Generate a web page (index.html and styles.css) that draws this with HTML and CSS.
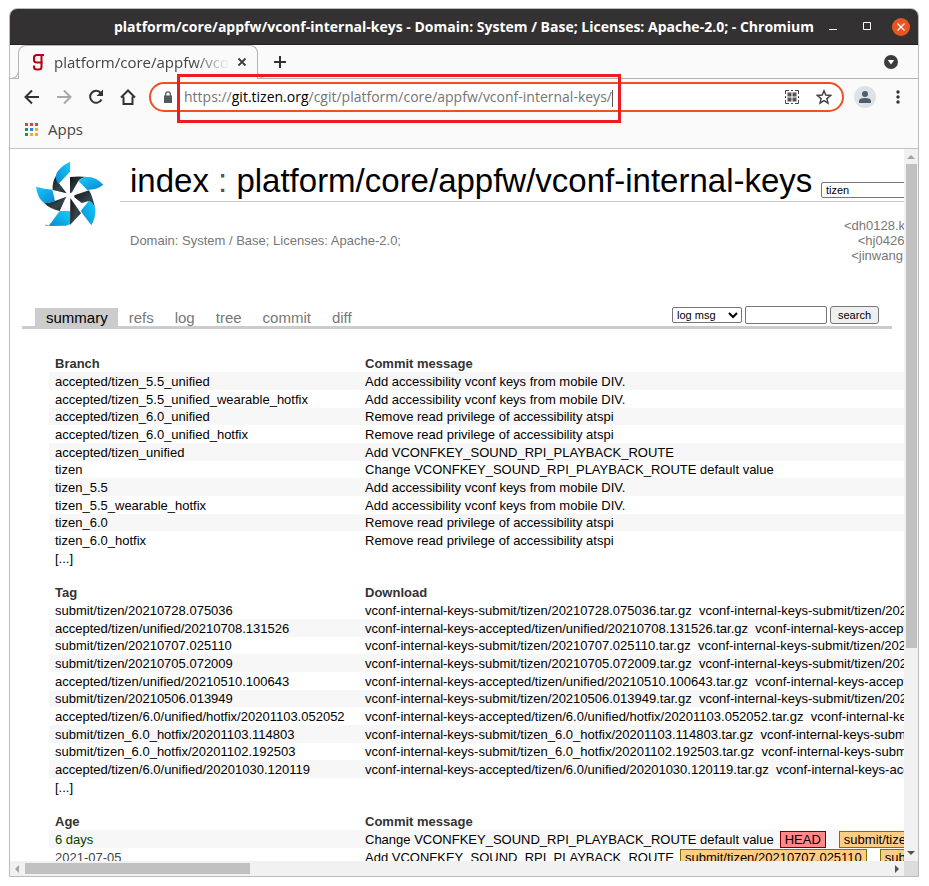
FILE: index.html
```html
<!DOCTYPE html>
<html lang="en">
<head>
<meta charset="utf-8">
<title>platform/core/appfw/vconf-internal-keys</title>
<link rel="stylesheet" href="styles.css">
</head>
<body>
<div class="window">
  <header class="titlebar">
    <div class="titlebar-text">platform/core/appfw/vconf-internal-keys - Domain: System / Base; Licenses: Apache-2.0; - Chromium</div>
    <button class="icon-btn" aria-label="Minimize"><svg width="10" height="18" viewBox="0 0 10 18"><path d="M1 11.5h8" stroke="#fff"/></svg></button>
    <button class="icon-btn" aria-label="Maximize"><svg width="10" height="18" viewBox="0 0 10 18"><path d="M1.5 4.500h7v7h-7z" fill="none" stroke="#fff"/></svg></button>
    <button class="icon-btn close-window" aria-label="Close"><svg width="18" height="18" viewBox="0 0 18 18"><circle cx="9" cy="9" r="9" fill="#e95420"/><path d="M5.500 5.500l7 7m0-7l-7 7" stroke="#fff" stroke-width="1.300"/></svg></button>
  </header>

  <div class="tabstrip">
    <div class="tab">
      <svg class="favicon" width="16" height="18" viewBox="0 0 16 18"><g fill="none" stroke="#b8000e" stroke-width="2"><path d="M14 2H7Q4 2 4 4.500V7q0 2.500 3 2.500h5.500"/><path d="M11.500 2v12q0 2.500-3 2.500H7q-3 0-3-2.500V12.500"/></g></svg>
      <span class="tab-title">platform/core/appfw/vconf-internal-keys</span>
      <button class="icon-btn" aria-label="Close tab"><svg width="10" height="10" viewBox="0 0 10 10"><path d="M1.500 1.500l7 7m0-7l-7 7" stroke="#3c4043" stroke-width="1.800"/></svg></button>
    </div>
    <button class="icon-btn new-tab" aria-label="New tab"><svg width="14" height="14" viewBox="0 0 14 14"><path d="M7 1v12M1 7h12" stroke="#333" stroke-width="2"/></svg></button>
    <button class="icon-btn tab-search" aria-label="Search tabs"><svg width="14" height="14" viewBox="0 0 14 14"><circle cx="7" cy="7" r="7" fill="#3c3c3c"/><path d="M3.800 5h6.400L7 9.500z" fill="#fff"/></svg></button>
  </div>

  <div class="toolbar">
    <button class="icon-btn" aria-label="Back"><svg width="16" height="16" viewBox="0 0 16 16"><path d="M15 8H2.500M8 1.500L1.500 8 8 14.500" fill="none" stroke="#333" stroke-width="2"/></svg></button>
    <button class="icon-btn" aria-label="Forward"><svg width="16" height="16" viewBox="0 0 16 16"><path d="M1 8h12.500M8 1.500L14.500 8 8 14.500" fill="none" stroke="#a8a8a8" stroke-width="2"/></svg></button>
    <button class="icon-btn" aria-label="Reload"><svg width="16" height="16" viewBox="0 0 16 16"><path d="M13.500 10.500A6 6 0 1 1 12.800 4" fill="none" stroke="#333" stroke-width="2"/><path d="M15 .5V7H8.500z" fill="#333"/></svg></button>
    <button class="icon-btn" aria-label="Home"><svg width="16" height="16" viewBox="0 0 16 16"><path d="M1 8.500L8 1.500l7 7M3.500 7.500V15h9V7.500" fill="none" stroke="#333" stroke-width="2"/></svg></button>
    <div class="omnibox">
      <svg width="10" height="12" viewBox="0 0 10 12"><path d="M1 4.500h8V12H1z" fill="#555a5f"/><path d="M2.700 5V3.200a2.300 2.300 0 0 1 4.600 0V5" fill="none" stroke="#555a5f" stroke-width="1.300"/></svg>
      <div class="url" role="textbox" aria-label="Address" contenteditable="true" spellcheck="false">https://<b>git.tizen.org</b>/cgit/platform/core/appfw/vconf-internal-keys/</div>
      <button class="icon-btn" aria-label="QR code"><svg width="14" height="14" viewBox="0 0 14 14"><path d="M.5 4V.5H4M6 .5h2M10 .5h3.500V4M13.500 6v2M13.500 10v3.500H10M8 13.500H6M4 13.500H.5V10M.5 8V6" fill="none" stroke="#444"/><path d="M2.500 2.500h4v4h-4zM7.500 2.500h4v4h-4zM2.500 7.500h4v4h-4zM7.500 7.500h4v4h-4z" fill="#555"/></svg></button>
      <button class="icon-btn" aria-label="Bookmark"><svg width="16" height="16" viewBox="0 0 16 16"><path d="M8 1.800l1.800 4.300 4.700.4-3.600 3.100 1.100 4.600L8 11.700l-4 2.500 1.100-4.600-3.600-3.100 4.700-.4z" fill="none" stroke="#444" stroke-width="1.500"/></svg></button>
    </div>
    <button class="icon-btn" aria-label="Profile"><svg width="22" height="22" viewBox="0 0 22 22"><circle cx="11" cy="11" r="11" fill="#dee1e6"/><circle cx="11" cy="8" r="3" fill="#4d5d70"/><path d="M5 17v-2q0-3 6-3t6 3v2z" fill="#4d5d70"/></svg></button>
    <button class="icon-btn menu-btn" aria-label="Menu"><svg width="4" height="14" viewBox="0 0 4 14"><g fill="#333"><circle cx="2" cy="2" r="1.700"/><circle cx="2" cy="7" r="1.700"/><circle cx="2" cy="12" r="1.700"/></g></svg></button>
    <div class="highlight"></div>
  </div>

  <nav class="bookmarks">
    <a href="#"><svg width="13" height="13" viewBox="0 0 13 13"><path d="M0 0h3v3H0zM5 0h3v3H5zM10 0h3v3h-3z" fill="#f33a3a"/><path d="M0 5h3v3H0z" fill="#149a55"/><path d="M5 5h3v3H5z" fill="#1a8cf0"/><path d="M10 5h3v3h-3z" fill="#faa72c"/><path d="M0 10h3v3H0z" fill="#149a55"/><path d="M5 10h3v3H5zM10 10h3v3h-3z" fill="#faa72c"/></svg>Apps</a>
  </nav>

  <div class="viewport">
    <main class="page">
      <div class="repo-header">
        <a class="logo" href="#" aria-label="Tizen"><svg width="76" height="74" viewBox="0 0 228 222">
          <defs>
            <linearGradient id="cy" x1="0" y1="0" x2="1" y2="1"><stop offset="0" stop-color="#19c8fa"/><stop offset="1" stop-color="#0a86d0"/></linearGradient>
            <linearGradient id="cz" x1="1" y1="0" x2="0" y2="1"><stop offset="0" stop-color="#10d0ff"/><stop offset="1" stop-color="#0c86cf"/></linearGradient>
            <linearGradient id="dk" x1="0" y1="0" x2="1" y2="1"><stop offset="0" stop-color="#101416"/><stop offset=".6" stop-color="#36454c"/><stop offset="1" stop-color="#1c2529"/></linearGradient>
          </defs>
          <g fill="url(#dk)">
            <path d="M73 52Q60 72 62 96l42 10-23-30z"/>
            <path d="M114 57q28-3 52 0-20 2-27 12l-19 34-6 3z"/>
            <path d="M127 112l44-15q10 14 19 58-8-25-22-25l-19 5-22-17z"/>
            <path d="M115 120l32 46-33 35z"/>
            <path d="M37 136q14 0 29-6l37-14-5 10-15 33q-28-5-46-23z"/>
          </g>
          <path d="M114 11v30L80 77q-12-12-8-26 6-22 42-40z" fill="url(#cz)"/>
          <path d="M140 70q8-14 26-13 25-2 48 23-16 14-48 16z" fill="url(#cy)"/>
          <path d="M146 159l25-31q12 4 19 24 2 25-12 50z" fill="url(#cz)"/>
          <path d="M50 204l33-45h31v40l-12 4z" fill="url(#cz)"/>
          <path d="M12 86q25 7 49 9l8 34q-17 8-32 7-21-16-25-50z" fill="url(#cy)"/>
          <path d="M39 202h10" stroke="#999" stroke-width="3"/>
        </svg></a>
        <h1><a href="#">index</a> : <a href="#">platform/core/appfw/vconf-internal-keys</a></h1>
        <form class="branch-form"><select aria-label="Branch"><option>tizen</option></select></form>
        <p class="desc">Domain: System / Base; Licenses: Apache-2.0;</p>
        <p class="owner">&lt;dh0128.kwak@samsung.com&gt;<br>&lt;hj0426.kim@samsung.com&gt;<br>&lt;jinwang.ahn@samsung.com&gt;</p>
      </div>

      <div class="tabs">
        <nav><a class="active" href="#">summary</a><a href="#">refs</a><a href="#">log</a><a href="#">tree</a><a href="#">commit</a><a href="#">diff</a></nav>
        <form class="search">
          <select aria-label="Search type"><option>log msg</option></select>
          <input type="text" aria-label="Search text">
          <button type="button">search</button>
        </form>
      </div>

      <table class="listing">
        <tbody class="odd">
          <tr><th>Branch</th><th>Commit message</th></tr>
          <tr><td><a href="#">accepted/tizen_5.5_unified</a></td><td><a href="#">Add accessibility vconf keys from mobile DIV.</a></td></tr>
          <tr><td><a href="#">accepted/tizen_5.5_unified_wearable_hotfix</a></td><td><a href="#">Add accessibility vconf keys from mobile DIV.</a></td></tr>
          <tr><td><a href="#">accepted/tizen_6.0_unified</a></td><td><a href="#">Remove read privilege of accessibility atspi</a></td></tr>
          <tr><td><a href="#">accepted/tizen_6.0_unified_hotfix</a></td><td><a href="#">Remove read privilege of accessibility atspi</a></td></tr>
          <tr><td><a href="#">accepted/tizen_unified</a></td><td><a href="#">Add VCONFKEY_SOUND_RPI_PLAYBACK_ROUTE</a></td></tr>
          <tr><td><a href="#">tizen</a></td><td><a href="#">Change VCONFKEY_SOUND_RPI_PLAYBACK_ROUTE default value</a></td></tr>
          <tr><td><a href="#">tizen_5.5</a></td><td><a href="#">Add accessibility vconf keys from mobile DIV.</a></td></tr>
          <tr><td><a href="#">tizen_5.5_wearable_hotfix</a></td><td><a href="#">Add accessibility vconf keys from mobile DIV.</a></td></tr>
          <tr><td><a href="#">tizen_6.0</a></td><td><a href="#">Remove read privilege of accessibility atspi</a></td></tr>
          <tr><td><a href="#">tizen_6.0_hotfix</a></td><td><a href="#">Remove read privilege of accessibility atspi</a></td></tr>
          <tr class="plain"><td colspan="2"><a href="#">[...]</a></td></tr>
          <tr class="plain"><td colspan="2"></td></tr>
        </tbody>
        <tbody class="even">
          <tr><th>Tag</th><th>Download</th></tr>
          <tr><td><a href="#">submit/tizen/20210728.075036</a></td><td><a href="#">vconf-internal-keys-submit/tizen/20210728.075036.tar.gz</a>&nbsp; <a href="#">vconf-internal-keys-submit/tizen/20210728.075036.zip</a></td></tr>
          <tr><td><a href="#">accepted/tizen/unified/20210708.131526</a></td><td><a href="#">vconf-internal-keys-accepted/tizen/unified/20210708.131526.tar.gz</a>&nbsp; <a href="#">vconf-internal-keys-accepted/tizen/unified/20210708.131526.zip</a></td></tr>
          <tr><td><a href="#">submit/tizen/20210707.025110</a></td><td><a href="#">vconf-internal-keys-submit/tizen/20210707.025110.tar.gz</a>&nbsp; <a href="#">vconf-internal-keys-submit/tizen/20210707.025110.zip</a></td></tr>
          <tr><td><a href="#">submit/tizen/20210705.072009</a></td><td><a href="#">vconf-internal-keys-submit/tizen/20210705.072009.tar.gz</a>&nbsp; <a href="#">vconf-internal-keys-submit/tizen/20210705.072009.zip</a></td></tr>
          <tr><td><a href="#">accepted/tizen/unified/20210510.100643</a></td><td><a href="#">vconf-internal-keys-accepted/tizen/unified/20210510.100643.tar.gz</a>&nbsp; <a href="#">vconf-internal-keys-accepted/tizen/unified/20210510.100643.zip</a></td></tr>
          <tr><td><a href="#">submit/tizen/20210506.013949</a></td><td><a href="#">vconf-internal-keys-submit/tizen/20210506.013949.tar.gz</a>&nbsp; <a href="#">vconf-internal-keys-submit/tizen/20210506.013949.zip</a></td></tr>
          <tr><td><a href="#">accepted/tizen/6.0/unified/hotfix/20201103.052052</a></td><td><a href="#">vconf-internal-keys-accepted/tizen/6.0/unified/hotfix/20201103.052052.tar.gz</a>&nbsp; <a href="#">vconf-internal-keys-accepted/tizen/6.0/unified/hotfix/20201103.052052.zip</a></td></tr>
          <tr><td><a href="#">submit/tizen_6.0_hotfix/20201103.114803</a></td><td><a href="#">vconf-internal-keys-submit/tizen_6.0_hotfix/20201103.114803.tar.gz</a>&nbsp; <a href="#">vconf-internal-keys-submit/tizen_6.0_hotfix/20201103.114803.zip</a></td></tr>
          <tr><td><a href="#">submit/tizen_6.0_hotfix/20201102.192503</a></td><td><a href="#">vconf-internal-keys-submit/tizen_6.0_hotfix/20201102.192503.tar.gz</a>&nbsp; <a href="#">vconf-internal-keys-submit/tizen_6.0_hotfix/20201102.192503.zip</a></td></tr>
          <tr><td><a href="#">accepted/tizen/6.0/unified/20201030.120119</a></td><td><a href="#">vconf-internal-keys-accepted/tizen/6.0/unified/20201030.120119.tar.gz</a>&nbsp; <a href="#">vconf-internal-keys-accepted/tizen/6.0/unified/20201030.120119.zip</a></td></tr>
          <tr class="plain"><td colspan="2"><a href="#">[...]</a></td></tr>
          <tr class="plain"><td colspan="2"></td></tr>
        </tbody>
        <tbody class="odd">
          <tr><th>Age</th><th>Commit message</th></tr>
          <tr><td class="age-days">6 days</td><td><a href="#">Change VCONFKEY_SOUND_RPI_PLAYBACK_ROUTE default value</a><a class="deco head" href="#">HEAD</a><a class="deco" href="#">submit/tizen/20210728.075036</a></td></tr>
          <tr><td class="age-old">2021-07-05</td><td><a href="#">Add VCONFKEY_SOUND_RPI_PLAYBACK_ROUTE</a><a class="deco" href="#">submit/tizen/20210707.025110</a><a class="deco" href="#">submit/tizen/20210705.072009</a></td></tr>
        </tbody>
      </table>
    </main>
    <div class="vbar">
      <svg width="14" height="15" viewBox="0 0 14 15"><path d="M3 10l4-4 4 4z" fill="#a3a3a3"/></svg>
      <div class="vtrack"><div class="vthumb"></div></div>
      <svg width="14" height="15" viewBox="0 0 14 15"><path d="M3 5l4 4 4-4z" fill="#505050"/></svg>
    </div>
    <div class="hbar">
      <svg width="15" height="15" viewBox="0 0 15 15"><path d="M9 4L5 8l4 4z" fill="#a3a3a3"/></svg>
      <div class="htrack"><div class="hthumb"></div></div>
      <svg width="15" height="15" viewBox="0 0 15 15"><path d="M6 4l4 4-4 4z" fill="#505050"/></svg>
    </div>
    <div class="corner"></div>
  </div>
</div>
</body>
</html>
```

FILE: styles.css
```css
* { box-sizing: border-box; }

body {
  margin: 0;
  height: 100vh;
  padding: 8px 10px 9px 9px;
  background: #fff;
  font: 13px/15px "Liberation Sans", Arial, sans-serif;
  color: #333;
}

a { color: #000; text-decoration: none; }
svg { display: block; flex: none; }

.window {
  display: flex;
  flex-direction: column;
  height: 100%;
  border: 1px solid #bbb;
  border-radius: 8px 8px 0 0;
  overflow: hidden;
  background: #fafafa;
  font-family: "Open Sans", "Noto Sans", sans-serif;
}

.icon-btn {
  flex: none;
  padding: 0;
  border: 0;
  background: none;
}

/* Browser frame */
.titlebar {
  display: flex;
  align-items: center;
  gap: 24px;
  height: 36px;
  flex: none;
  padding: 0 8px;
  background: #333132;
  border-bottom: 1px solid #222;
}
.titlebar-text {
  flex: 1;
  margin-right: -14px;
  padding-left: 92px;
  font-size: 14px;
  font-weight: 700;
  text-align: center;
  white-space: nowrap;
  color: #fff;
}
.close-window { margin-left: -4px; }

.tabstrip {
  display: flex;
  align-items: center;
  flex: none;
  height: 34px;
  padding: 0 20px 0 8px;
  border-bottom: 1px solid #b4b4b4;
}
.tab {
  position: relative;
  display: flex;
  align-items: center;
  gap: 8px;
  align-self: flex-end;
  width: 240px;
  height: 34px;
  margin-bottom: -1px;
  padding: 0 10px 2px 11px;
  border: 1px solid #b4b4b4;
  border-bottom: 0;
  border-radius: 8px 8px 0 0;
  background: #fafafa;
}
.tab::before,
.tab::after {
  content: "";
  position: absolute;
  bottom: 0;
  width: 8px;
  height: 8px;
  border: 1px solid #b4b4b4;
  border-top: 0;
  background: #fafafa;
}
.tab::before { right: 100%; border-left: 0; border-bottom-right-radius: 8px; }
.tab::after { left: 100%; border-right: 0; border-bottom-left-radius: 8px; }
.tab-title {
  flex: 1;
  overflow: hidden;
  white-space: nowrap;
  font-size: 15px;
  line-height: 20px;
  color: #444;
  -webkit-mask-image: linear-gradient(90deg, #000 80%, transparent);
  mask-image: linear-gradient(90deg, #000 80%, transparent);
}
.new-tab { margin-left: 15px; }
.tab-search { margin-left: auto; }

.toolbar {
  position: relative;
  display: flex;
  align-items: center;
  gap: 16px;
  flex: none;
  height: 36px;
  padding: 0 18px 0 14px;
}
.omnibox {
  display: flex;
  align-items: center;
  gap: 17px;
  flex: 1;
  height: 30px;
  margin: 0 -6px 0 -3px;
  padding: 0 10px 0 12px;
  border: 2px solid #f04e23;
  border-radius: 15px;
  background: #fff;
}
.url {
  flex: 1;
  margin-left: -6px;
  font-size: 14px;
  line-height: 20px;
  white-space: nowrap;
  color: #757575;
}
.url b { font-weight: 400; color: #000; }
.url::after {
  content: "";
  display: inline-block;
  width: 1px;
  height: 17px;
  vertical-align: middle;
  background: #555;
}
.menu-btn { margin-left: 4px; }
.highlight {
  position: absolute;
  left: 167px;
  top: -5px;
  width: 444px;
  height: 49px;
  border: 3px solid #ed1c24;
  pointer-events: none;
}

.bookmarks {
  flex: none;
  height: 34px;
  padding: 3px 15px;
  border-bottom: 1px solid #c4c4c4;
}
.bookmarks a {
  display: inline-flex;
  align-items: center;
  gap: 10px;
  font-size: 15px;
  line-height: 22px;
  color: #444;
}

/* Scrolled page area */
.viewport {
  display: grid;
  grid-template-columns: minmax(0, 1fr) 14px;
  grid-template-rows: minmax(0, 1fr) 15px;
  flex: 1;
  min-height: 0;
  background: #fff;
}
.page {
  overflow: hidden;
  padding-top: 13px;
  font-family: "Liberation Sans", Arial, sans-serif;
}

.vbar, .hbar { display: flex; background: #f1f1f1; }
.vbar { flex-direction: column; }
.vtrack, .htrack { flex: 1; }
.vtrack { padding-left: 2px; }
.htrack { padding: 2px 0; }
.vthumb, .hthumb { background: #c1c1c1; }
.vthumb { width: 11px; height: 71%; }
.hthumb { width: 26%; height: 11px; }
.corner { background: #dcdcdc; }

/* Repository header */
.repo-header {
  display: grid;
  grid-template-columns: 98px minmax(0, 1fr) 83px;
  margin-left: 12px;
}
.logo {
  grid-row: 1 / 3;
  margin: -4px 0 0 10px;
}
.repo-header h1 {
  margin: 0;
  padding: 0 0 2px 10px;
  border-bottom: 1px solid #ccc;
  font-size: 33px;
  font-weight: 400;
  line-height: 37px;
  white-space: nowrap;
  color: #555;
}
.branch-form {
  display: flex;
  align-items: flex-end;
  padding-bottom: 3px;
  border-bottom: 1px solid #ccc;
}
.branch-form select {
  flex: none;
  width: 240px;
  height: 16px;
}
.desc, .owner { margin: 16px 0 0; color: #777; }
.desc { align-self: center; padding-left: 10px; }
.owner {
  justify-self: start;
  margin-left: 23px;
  text-align: right;
}

select, .search input, .search button {
  margin: 0;
  border: 1px solid #767676;
  border-radius: 2px;
  background: #fff;
  font: 11px/14px "Liberation Sans", Arial, sans-serif;
  color: #000;
}

/* Section tabs */
.tabs {
  display: flex;
  justify-content: space-between;
  align-items: flex-end;
  margin: 43px 12px 0;
  padding: 0 13px;
  border-bottom: 3px solid #ccc;
}
.tabs nav { display: flex; }
.tabs nav a {
  padding: 1px 10px 0 11px;
  font-size: 15px;
  line-height: 17px;
  color: #777;
}
.tabs nav .active { background: #ccc; color: #000; }
.search {
  display: flex;
  align-items: center;
  gap: 3px;
  padding-bottom: 2px;
}
.search select { width: 70px; height: 16px; }
.search input { width: 82px; height: 18px; }
.search button {
  width: 49px;
  height: 18px;
  padding: 0;
  border-radius: 3px;
  background: #efefef;
}

/* Listing */
.listing {
  min-width: 100%;
  margin: 26px 0 0 39px;
  border-collapse: collapse;
  white-space: nowrap;
}
.listing th:first-child { min-width: 310px; }
.listing tr { height: 18px; }
.listing tr:nth-child(3n + 1) { height: 17px; }
.listing th, .listing td { padding: 0 6px; text-align: left; }
.odd tr:nth-child(even):not(.plain),
.even tr:nth-child(2n + 3):not(.plain) { background: #f7f7f7; }
.age-days { color: #040; }
.age-old { color: #444; }

.deco {
  display: inline-block;
  margin-left: 6px;
  padding: 0 4px;
  border: 1px solid #770;
  background: #fc8;
}
.deco + .deco { margin-left: 13px; }
.deco.head { border-color: #700; background: #f88; }
```
